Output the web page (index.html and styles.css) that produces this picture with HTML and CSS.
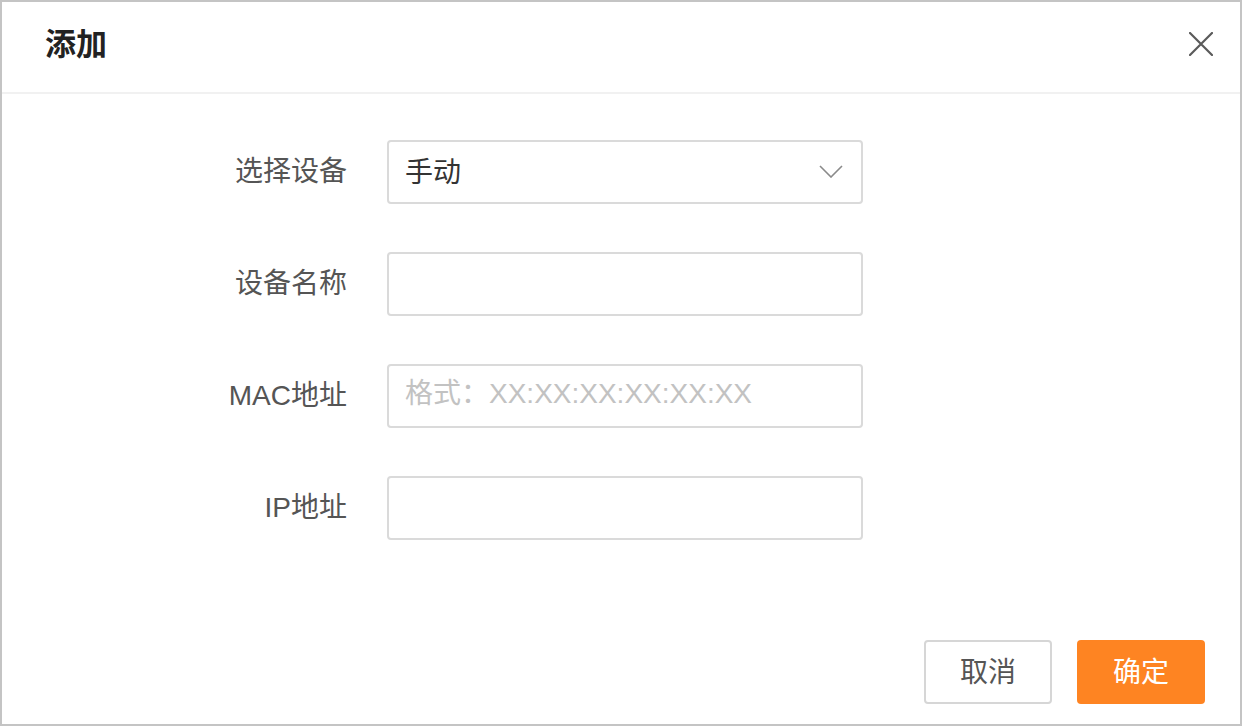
FILE: index.html
```html
<!DOCTYPE html>
<html lang="zh-CN">
<head>
<meta charset="utf-8">
<title>添加</title>
<link rel="stylesheet" href="styles.css">
</head>
<body>
<div class="dialog">
  <div class="dialog-header">
    <h1 class="dialog-title">添加</h1>
    <button class="close-btn" aria-label="关闭">
      <svg width="24" height="24" viewBox="0 0 24 24"><path d="M1 1 L23 23 M23 1 L1 23" stroke="#5a5a5a" stroke-width="2.2" fill="none" stroke-linecap="round"/></svg>
    </button>
  </div>
  <div class="dialog-body">
    <div class="form-row">
      <label class="form-label">选择设备</label>
      <div class="form-control select">
        <span class="select-value">手动</span>
        <svg class="chevron" width="24" height="13" viewBox="0 0 24 13"><path d="M1 1 L12 12 L23 1" stroke="#8a8a8a" stroke-width="1.6" fill="none"/></svg>
      </div>
    </div>
    <div class="form-row">
      <label class="form-label">设备名称</label>
      <input class="form-control" type="text">
    </div>
    <div class="form-row">
      <label class="form-label">MAC地址</label>
      <input class="form-control" type="text" placeholder="格式：XX:XX:XX:XX:XX:XX">
    </div>
    <div class="form-row">
      <label class="form-label">IP地址</label>
      <input class="form-control" type="text">
    </div>
  </div>
  <div class="dialog-footer">
    <button class="btn btn-default">取消</button>
    <button class="btn btn-primary">确定</button>
  </div>
</div>
</body>
</html>
```
FILE: styles.css
```css
* { box-sizing: border-box; }
html, body { margin: 0; padding: 0; }
body {
  font-family: "Liberation Sans", "Noto Sans CJK SC", sans-serif;
  background: #fff;
}
.dialog {
  width: 1242px;
  height: 726px;
  border: 2px solid #c4c4c4;
  display: flex;
  flex-direction: column;
  background: #fff;
}
.dialog-header {
  height: 92px;
  border-bottom: 2px solid #f1f1f1;
  display: flex;
  align-items: center;
  justify-content: space-between;
  padding: 0 27px 6px 43px;
}
.dialog-title {
  margin: 0;
  font-size: 31px;
  font-weight: bold;
  color: #222;
  line-height: 1;
}
.close-btn {
  border: 0;
  background: none;
  padding: 0;
  width: 24px;
  height: 24px;
  display: flex;
  cursor: pointer;
}
.dialog-body {
  flex: 1;
  padding: 46px 0 0 195px;
  display: flex;
  flex-direction: column;
  gap: 48px;
}
.form-row {
  display: flex;
  align-items: center;
  gap: 40px;
}
.form-label {
  width: 150px;
  text-align: right;
  font-size: 28px;
  color: #555;
  padding-bottom: 6px;
}
.form-control {
  width: 476px;
  height: 64px;
  border: 2px solid #dadada;
  border-radius: 4px;
  padding: 0 16px 5px;
  font-family: "Liberation Sans", "Noto Sans CJK SC", sans-serif;
  font-size: 28px;
  color: #333;
  background: #fff;
  outline: none;
}
.form-control::placeholder { color: #c2c2c2; }
.select {
  display: flex;
  align-items: center;
  justify-content: space-between;
  padding-right: 18px;
}
.chevron { margin-top: 4px; }
.dialog-footer {
  display: flex;
  justify-content: flex-end;
  gap: 25px;
  padding: 0 35px 20px 0;
}
.btn {
  width: 128px;
  height: 64px;
  border-radius: 4px;
  font-family: "Liberation Sans", "Noto Sans CJK SC", sans-serif;
  font-size: 28px;
  cursor: pointer;
  padding: 0 0 5px;
}
.btn-default {
  border: 2px solid #d6d6d6;
  background: #fff;
  color: #555;
}
.btn-primary {
  border: 0;
  background: #fe8422;
  color: #fff;
}
```
